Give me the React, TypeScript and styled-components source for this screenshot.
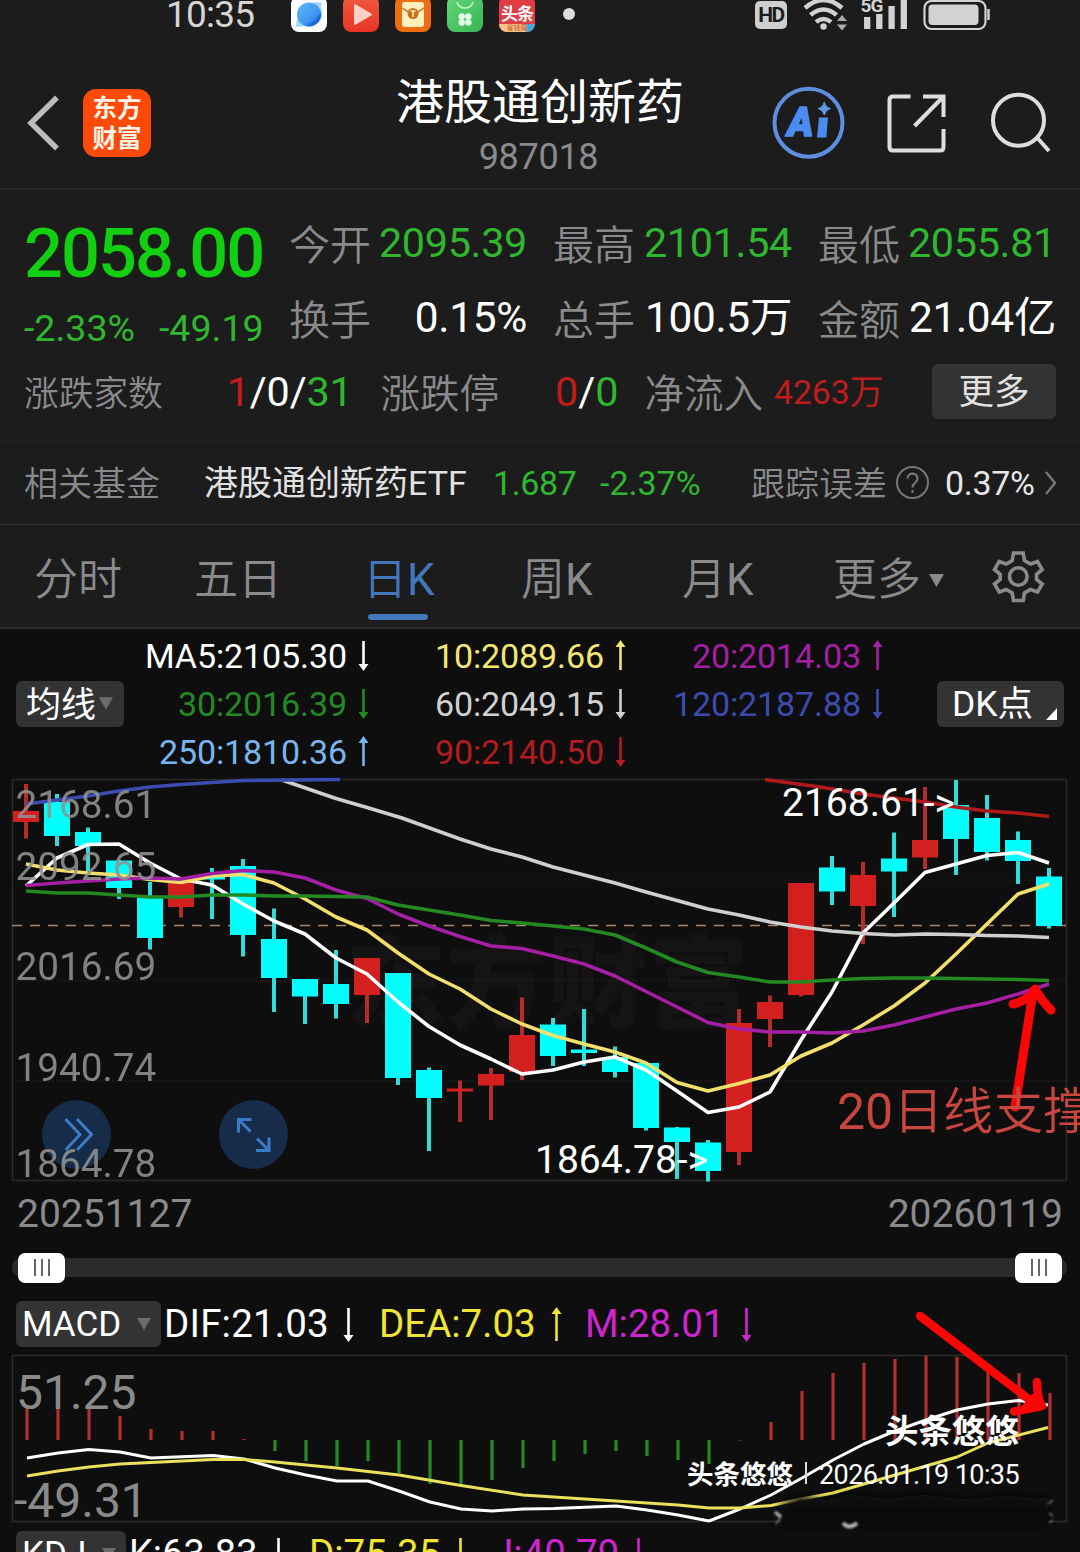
import React from 'react';
import styled, { createGlobalStyle } from 'styled-components';

const GREEN = '#2fb72f';
const RED = '#c01c1c';
const GRAY = '#8a8a8c';
const CYAN = '#00ffff';

const GlobalStyle = createGlobalStyle`
  * {
    box-sizing: border-box;
  }
  body {
    margin: 0;
    background: #0e0e0e;
    font-family: Roboto, 'Noto Sans CJK SC', sans-serif;
  }
  svg {
    display: block;
    flex: none;
  }
`;

const Page = styled.div`
  position: relative;
  width: 1080px;
  height: 1552px;
  overflow: hidden;
  background: #0e0e0e;
`;

const TopArea = styled.div`
  background: #1c1c1c;
`;

interface TextProps {
  $size?: number;
  $color?: string;
  $w?: number;
  $ml?: number;
  $ls?: number;
  $weight?: number;
}

const Text = styled.span<TextProps>`
  display: block;
  flex: none;
  white-space: nowrap;
  line-height: 1;
  font-size: ${(props) => props.$size || 34}px;
  color: ${(props) => props.$color || '#fff'};
  width: ${(props) => (props.$w ? `${props.$w}px` : 'auto')};
  margin-left: ${(props) => props.$ml || 0}px;
  letter-spacing: ${(props) => props.$ls || 0}px;
  font-weight: ${(props) => props.$weight || 400};
`;

const Label = styled(Text)`
  padding-bottom: 3px;
  color: ${GRAY};
  font-weight: 350;
  font-family: 'Noto Sans CJK SC', sans-serif;
`;

const ButtonText = styled(Text)`
  padding-top: 3px;
`;

/* status bar */

const StatusBar = styled.div`
  display: flex;
  align-items: flex-start;
  height: 64px;
  padding-left: 166px;
`;

const Clock = styled.div`
  width: 125px;
  margin-top: -4px;
  font-size: 37px;
  line-height: 38px;
  letter-spacing: -0.8px;
  color: #d6d6d6;
`;

const AppIcons = styled.div`
  display: flex;
  gap: 16px;
  margin-top: -4px;
`;

const AppIcon = styled.div<{ $bg: string }>`
  width: 36px;
  height: 36px;
  overflow: hidden;
  border-radius: 8px;
  background: ${(props) => props.$bg};
`;

const NewsTitle = styled.div`
  height: 28px;
  padding-top: 8px;
  text-align: center;
  font-size: 17px;
  font-weight: 700;
  line-height: 20px;
  letter-spacing: -1px;
  color: #fff;
  background: #e03c44;
`;

const NewsStrip = styled.div`
  height: 8px;
  overflow: hidden;
  font-size: 7px;
  line-height: 8px;
  text-align: center;
  color: #c8502c;
  background: linear-gradient(90deg, #f6c48a 70%, #3fa8d8 80%);
`;

const Dot = styled.div`
  width: 12px;
  height: 12px;
  margin: 8px 0 0 28px;
  border-radius: 50%;
  background: #dcdcdc;
`;

const HdBadge = styled.div`
  width: 32px;
  height: 28px;
  margin: 1px 0 0 180px;
  border-radius: 5px;
  background: #cfcfcf;
  color: #1c1c1c;
  font-size: 21px;
  font-weight: 700;
  line-height: 29px;
  text-align: center;
  letter-spacing: -1.5px;
`;

/* header */

const Header = styled.div`
  display: grid;
  grid-template-columns: 397px 286px 1fr;
  height: 126px;
  border-bottom: 2px solid #282828;
`;

const HeaderLeft = styled.div`
  display: flex;
  align-items: flex-start;
  padding: 25px 0 0 24px;
`;

const Logo = styled.div`
  width: 68px;
  height: 68px;
  margin-left: 21px;
  padding-top: 3px;
  border-radius: 13px;
  background: #fe4a08;
  color: #fff4e8;
  font-family: 'Noto Sans CJK SC', sans-serif;
  font-size: 24.5px;
  font-weight: 700;
  line-height: 29.5px;
  text-align: center;
`;

const Title = styled.div`
  display: flex;
  flex-direction: column;
  align-items: center;
  padding-top: 12px;
`;

const Name = styled.div`
  font-size: 48px;
  line-height: 54px;
  white-space: nowrap;
  color: #fff;
`;

const Code = styled.div`
  margin: 6px 3px 0 0;
  font-size: 36px;
  line-height: 42px;
  letter-spacing: -0.3px;
  color: ${GRAY};
`;

const HeaderIcons = styled.div`
  display: flex;
  align-items: flex-start;
  padding: 22px 0 0 89px;
`;

/* quote */

const Quote = styled.div`
  height: 252px;
  padding: 12px 24px 0 24px;
  border-bottom: 1px solid #262626;
`;

const QuoteTop = styled.div`
  display: grid;
  grid-template-columns: 265px 1fr;
  height: 154px;
`;

const Price = styled.div`
  height: 102px;
  width: 250px;
  font-size: 68.5px;
  font-weight: 500;
  line-height: 104px;
  letter-spacing: -1.9px;
  color: #12cf12;
`;

const Change = styled.div`
  display: flex;
  height: 50px;
  align-items: center;
`;

const StatGrid = styled.div`
  display: grid;
  grid-template-columns: 238px 239px 238px;
  grid-template-rows: 75px 75px;
  column-gap: 26px;
  padding-top: 4px;
`;

const Stat = styled.div`
  display: flex;
  align-items: center;
  justify-content: space-between;
`;

const Row = styled.div<{ $h: number }>`
  display: flex;
  align-items: center;
  height: ${(props) => props.$h}px;
`;

const Button = styled.div<{ $w: number; $h: number }>`
  display: flex;
  flex: none;
  align-items: center;
  width: ${(props) => props.$w}px;
  height: ${(props) => props.$h}px;
  border-radius: 6px;
  background: #333334;
`;

const MoreButton = styled(Button)`
  justify-content: center;
  margin: 0 0 3px auto;
`;

const FundRow = styled(Row)`
  padding-left: 24px;
  border-bottom: 1px solid #333;
`;

/* tabs */

const Tabs = styled.div`
  display: flex;
  height: 104px;
  padding-left: 34px;
  border-bottom: 2px solid #2c2c2e;
`;

const Tab = styled.div<{ $w: number; $active?: boolean }>`
  width: ${(props) => props.$w}px;
  padding-top: 30px;
  font-size: 44px;
  font-weight: 350;
  line-height: 50px;
  white-space: nowrap;
  color: ${(props) => (props.$active ? '#4377bb' : GRAY)};
`;

const Latin = styled.span`
  font-weight: 400;
`;

const TabLine = styled.div`
  width: 60px;
  height: 6px;
  margin: 9px 0 0 5px;
  border-radius: 3px;
  background: #4377bb;
`;

const TabMore = styled.div`
  display: flex;
  align-items: center;
  gap: 8px;
`;

/* MA legend */

const Legend = styled.div`
  display: flex;
  align-items: center;
  height: 148px;
  padding: 1px 0 0 16px;
`;

const LegendGrid = styled.div`
  display: grid;
  grid-template-columns: 246px 257px 257px;
  grid-template-rows: repeat(3, 48px);
  width: 813px;
`;

const LegendItem = styled.div`
  display: flex;
  align-items: center;
  justify-content: flex-end;
  gap: 10px;
`;

/* bottom part */

const Dates = styled.div`
  display: flex;
  justify-content: space-between;
  height: 61px;
  padding: 5px 17px 0 17px;
`;

const DateText = styled.span`
  font-size: 39px;
  line-height: 40px;
  color: ${GRAY};
`;

const Track = styled.div`
  display: flex;
  align-items: center;
  justify-content: space-between;
  height: 19px;
  margin: 8px 13px 18px 12px;
  padding: 0 5px 0 6px;
  border-radius: 10px;
  background: #2b2b2d;
`;

const Handle = styled.div`
  display: flex;
  align-items: center;
  justify-content: center;
  gap: 5px;
  width: 47px;
  height: 30px;
  border-radius: 7px;
  background: #fff;
`;

const Grip = styled.i`
  width: 2px;
  height: 17px;
  background: #666;
`;

const IndicatorRow = styled.div<{ $h: number }>`
  display: flex;
  align-items: center;
  height: ${(props) => props.$h}px;
  padding-left: 16px;
`;

const Stamp = styled.div`
  position: absolute;
  right: 61px;
  top: 1411px;
  display: flex;
  flex-direction: column;
  align-items: flex-end;
  color: #fff;
`;

const StampName = styled.div`
  font-size: 33.5px;
  font-weight: 700;
  line-height: 42px;
`;

const StampLine = styled.div`
  display: flex;
  align-items: center;
  height: 44px;
`;

const StampBar = styled.div`
  width: 2px;
  height: 22px;
  margin: 0 12px 4px;
  background: #ddd;
`;

const Overlay = styled.svg`
  position: absolute;
  left: 0;
  top: 0;
  pointer-events: none;
`;

type Dir = 'up' | 'down';

const Arrow = ({ dir, color, h = 31 }: { dir: Dir; color: string; h?: number }) => (
  <svg width='13' height={h} viewBox={`0 0 13 ${h}`}>
    <g transform={dir === 'up' ? `rotate(180 6.5 ${h / 2})` : undefined}>
      <path d={`M6.5 1V${h - 5}`} stroke={color} strokeWidth='2.6' />
      <path d={`M1.5 ${h - 7}H11.5L6.5 ${h}Z`} fill={color} />
    </g>
  </svg>
);

const Caret = ({ color, w = 15, h = 13 }: { color: string; w?: number; h?: number }) => (
  <svg width={w} height={h} viewBox='0 0 15 13' preserveAspectRatio='none'>
    <path d='M0 0H15L7.5 13Z' fill={color} />
  </svg>
);

const StatusIcons = () => (
  <StatusBar>
    <Clock>10:35</Clock>
    <AppIcons>
      <AppIcon $bg='#fbfdff'>
        <svg width='36' height='36'>
          <defs>
            <linearGradient id='globe' x1='0' y1='0' x2='1' y2='1'>
              <stop offset='0' stopColor='#5db8fb' />
              <stop offset='0.6' stopColor='#4397f3' />
              <stop offset='1' stopColor='#1a5fd8' />
            </linearGradient>
          </defs>
          <path d='M5 31C5 26 8 10 19 7C24 6 29 6 31 7C29 10 32 15 31 20C29 29 20 33 13 30Z' fill='#a5d5fb' />
          <circle cx='18' cy='18.5' r='12' fill='url(#globe)' />
          <path d='M15 29.5C22 27 28 22 29.8 16C31.5 24 24 31.5 15 29.5Z' fill='#1767de' />
        </svg>
      </AppIcon>
      <AppIcon $bg='linear-gradient(#f0593d, #e83525)'>
        <svg width='36' height='36'>
          <path d='M12 9L28 18.5L12 28Z' fill='#ffd0c6' stroke='#ffd0c6' strokeWidth='2' strokeLinejoin='round' />
        </svg>
      </AppIcon>
      <AppIcon $bg='#ee6d12'>
        <svg width='36' height='36'>
          <rect x='7' y='6' width='22' height='25' rx='3' fill='#fff0c0' />
          <path d='M7 12L18 19L29 12' fill='none' stroke='#d08638' strokeWidth='1.5' />
          <circle cx='18' cy='17.5' r='5.5' fill='#c8721e' />
          <path d='M15.5 15H20.5M18 15V21' stroke='#ffe9b8' strokeWidth='1.6' />
        </svg>
      </AppIcon>
      <AppIcon $bg='linear-gradient(135deg, #64d877, #36b455)'>
        <svg width='36' height='36' fill='#e4ffe6'>
          <path d='M10 6C12 14 24 14 26 6' fill='none' stroke='#b9f3c0' strokeWidth='1.6' />
          <circle cx='14.7' cy='20.5' r='3.2' />
          <circle cx='21.3' cy='20.5' r='3.2' />
          <circle cx='14.7' cy='26.5' r='3.2' />
          <circle cx='21.3' cy='26.5' r='3.2' />
        </svg>
      </AppIcon>
      <AppIcon $bg='#e03c44'>
        <NewsTitle>头条</NewsTitle>
        <NewsStrip>省钱薅</NewsStrip>
      </AppIcon>
    </AppIcons>
    <Dot />
    <HdBadge>HD</HdBadge>
    <svg width='204' height='32' viewBox='787 0 204 32' fill='none' stroke='#d2d2d2'>
      <path d='M805 8Q823.5 -8 842 8' strokeWidth='4.5' />
      <path d='M810.5 15Q823.5 4 836.5 15' strokeWidth='4.5' />
      <path d='M816 22Q823.5 16 831 22' strokeWidth='4.5' />
      <circle cx='823.5' cy='26.5' r='3.2' fill='#d2d2d2' stroke='none' />
      <path d='M837 21L842 15L847 21ZM837 24.5L842 30.5L847 24.5Z' fill='#aaa' stroke='none' />
      <path d='M867.2 17V29M879.3 14V29M891.6 6V29M903.8 -2V29' strokeWidth='6.3' />
      <text x='860.5' y='12' fill='#d2d2d2' stroke='none' fontSize='19' fontWeight='700' letterSpacing='-0.8'>
        5G
      </text>
      <rect x='924.5' y='1' width='61' height='28' rx='7' strokeWidth='2.2' />
      <rect x='928.5' y='4.5' width='50' height='20.5' rx='4' fill='#d2d2d2' stroke='none' />
      <path d='M988.5 9V20' strokeWidth='2.5' />
    </svg>
  </StatusBar>
);

const PageHeader = () => (
  <Header>
    <HeaderLeft>
      <svg width='38' height='68' viewBox='24 89 38 68'>
        <path d='M57 97.5L31 123L57 148.5' fill='none' stroke='#bcbcbc' strokeWidth='5.5' />
      </svg>
      <Logo>
        东方
        <br />
        财富
      </Logo>
    </HeaderLeft>
    <Title>
      <Name>港股通创新药</Name>
      <Code>987018</Code>
    </Title>
    <HeaderIcons>
      <svg width='284' height='74' viewBox='772 86 284 74' fill='none' stroke='#dedede' strokeWidth='4'>
        <circle cx='808.5' cy='122.7' r='34' stroke='#5e8fdf' />
        <text
          x='787.5'
          y='136'
          fill='#4c8cf2'
          stroke='#4c8cf2'
          strokeWidth='1.5'
          fontSize='41'
          fontWeight='900'
          fontStyle='italic'
          textLength='26'
          lengthAdjust='spacingAndGlyphs'
        >
          A
        </text>
        <path d='M819 117.5H828L826.3 137.5H817Z' fill='#4c8cf2' stroke='none' />
        <path
          d='M824.3 102Q825.5 107.5 830.5 108.5Q825.5 109.8 824.3 115Q823 109.8 818 108.5Q823 107.5 824.3 102Z'
          fill='#5e9bea'
          stroke='#5e9bea'
          strokeWidth='1'
        />
        <path d='M910.5 96.5H893Q889.5 96.5 889.5 100V147Q889.5 150.5 893 150.5H940.5Q943.5 150.5 943.5 147V129' />
        <path d='M923 96.5H943.5V117M943 97L914.5 126' />
        <circle cx='1018.5' cy='120.2' r='25.5' />
        <path d='M1037 137.5L1049 151' />
      </svg>
    </HeaderIcons>
  </Header>
);

const stats = [
  { label: '今开', value: '2095.39', color: GREEN, size: 41.3 },
  { label: '最高', value: '2101.54', color: GREEN, size: 41.3 },
  { label: '最低', value: '2055.81', color: GREEN, size: 41.3 },
  { label: '换手', value: '0.15%', color: '#fff', size: 42.4 },
  { label: '总手', value: '100.5万', color: '#fff', size: 42.4 },
  { label: '金额', value: '21.04亿', color: '#fff', size: 42.4 },
];

const QuotePanel = () => (
  <Quote>
    <QuoteTop>
      <div>
        <Price>2058.00</Price>
        <Change>
          <Text $size={37.5} $color={GREEN} $w={135}>
            -2.33%
          </Text>
          <Text $size={37.5} $color={GREEN}>
            -49.19
          </Text>
        </Change>
      </div>
      <StatGrid>
        {stats.map((s) => (
          <Stat key={s.label}>
            <Label $size={41}>{s.label}</Label>
            <Text $size={s.size} $color={s.color} $ls={-0.3}>
              {s.value}
            </Text>
          </Stat>
        ))}
      </StatGrid>
    </QuoteTop>
    <Row $h={73}>
      <Label $size={34.7}>涨跌家数</Label>
      <Text $size={41.3} $color={RED} $ml={64} $ls={-0.2}>
        1<span style={{ color: '#fff' }}>/0/</span>
        <span style={{ color: GREEN }}>31</span>
      </Text>
      <Label $size={39.5} $ml={28}>
        涨跌停
      </Label>
      <Text $size={41.3} $color={RED} $ml={56}>
        0<span style={{ color: '#fff' }}>/</span>
        <span style={{ color: GREEN }}>0</span>
      </Text>
      <Label $size={39.5} $ml={26}>
        净流入
      </Label>
      <Text $size={33.7} $color={RED} $ml={11}>
        4263万
      </Text>
      <MoreButton $w={124} $h={55}>
        <ButtonText $size={35.5} $color='#e2e2e2'>
          更多
        </ButtonText>
      </MoreButton>
    </Row>
  </Quote>
);

const Fund = () => (
  <FundRow $h={83}>
    <Label $size={34} $w={180}>
      相关基金
    </Label>
    <Text $size={34} $color='#e2e2e2' $w={289}>
      港股通创新药ETF
    </Text>
    <Text $size={34} $color={GREEN} $w={107} $ls={-0.4}>
      1.687
    </Text>
    <Text $size={34} $color={GREEN} $w={151}>
      -2.37%
    </Text>
    <Label $size={34}>跟踪误差</Label>
    <svg width='58' height='34' viewBox='887 465 58 34' fill='none'>
      <circle cx='912.5' cy='481.5' r='15.5' stroke='#77777a' strokeWidth='2' />
      <path
        d='M907.5 477.5C907.5 471 917.5 471 917.5 477.5C917.5 482 912.5 481.5 912.5 486.5M912.5 489V492'
        stroke='#77777a'
        strokeWidth='2.2'
      />
    </svg>
    <Text $size={34} $color='#e6e6e6' $w={99} $ls={-0.3}>
      0.37%
    </Text>
    <svg width='14' height='26'>
      <path d='M2 2L11 13L2 24' fill='none' stroke='#77777a' strokeWidth='2.4' />
    </svg>
  </FundRow>
);

const TabBar = () => (
  <Tabs>
    <Tab $w={160}>分时</Tab>
    <Tab $w={169}>五日</Tab>
    <Tab $w={158} $active>
      日<Latin>K</Latin>
      <TabLine />
    </Tab>
    <Tab $w={161}>
      周<Latin>K</Latin>
    </Tab>
    <Tab $w={151}>
      月<Latin>K</Latin>
    </Tab>
    <Tab $w={158}>
      <TabMore>
        更多
        <Caret color='#8a8a8c' />
      </TabMore>
    </Tab>
    <svg width='54' height='104' viewBox='991 525 54 104' fill='none' stroke='#8a8a8c' strokeWidth='3.6'>
      <circle cx='1018.3' cy='576.5' r='8.8' />
      <path d='M1013.5 553H1023.2L1024.5 560.5L1030.5 564L1037.5 561.5L1042.2 569.5L1036.5 574.3V579.5L1042.2 584L1037.5 592L1030.5 589.5L1024.5 593L1023.2 600.5H1013.5L1012.2 593L1006.2 589.5L999.2 592L994.5 584L1000.2 579.5V574.3L994.5 569.5L999.2 561.5L1006.2 564L1012.2 560.5Z' />
    </svg>
  </Tabs>
);

const averages: { text: string; color: string; dir: Dir }[] = [
  { text: 'MA5:2105.30', color: '#fff', dir: 'down' },
  { text: '10:2089.66', color: '#f3e673', dir: 'up' },
  { text: '20:2014.03', color: '#a51fa5', dir: 'up' },
  { text: '30:2016.39', color: '#238a23', dir: 'down' },
  { text: '60:2049.15', color: '#d0d0d0', dir: 'down' },
  { text: '120:2187.88', color: '#3c4cae', dir: 'down' },
  { text: '250:1810.36', color: '#79b6ef', dir: 'up' },
  { text: '90:2140.50', color: '#b31c1f', dir: 'down' },
];

const MaLegend = () => (
  <Legend>
    <Button $w={108} $h={46}>
      <ButtonText $size={35} $ml={10}>
        均线
      </ButtonText>
      <svg width='17' height='13' viewBox='-3 0 18 13'>
        <path d='M0 0H15L7.5 13Z' fill='#6c6c6e' />
      </svg>
    </Button>
    <LegendGrid>
      {averages.map((m) => (
        <LegendItem key={m.text}>
          <Text $size={34} $color={m.color} $ls={-0.1}>
            {m.text}
          </Text>
          <Arrow dir={m.dir} color={m.color} />
        </LegendItem>
      ))}
    </LegendGrid>
    <Button $w={127} $h={46}>
      <ButtonText $size={35.5} $ml={15} $w={93}>
        DK点
      </ButtonText>
      <svg width='14' height='46'>
        <path d='M1 39L12 27V39Z' fill='#fff' />
      </svg>
    </Button>
  </Legend>
);

// [up, high, body top, body bottom, low]
const candles: [number, number, number, number, number][] = [
  [1, 784, 811, 822, 838.5],
  [0, 794, 802, 836, 846],
  [0, 827.5, 832, 846, 871],
  [0, 860, 860.5, 888, 899],
  [0, 882, 898, 938, 949.5],
  [1, 882, 882, 907, 917.5],
  [0, 868, 876, 879.5, 919],
  [0, 859, 866, 935, 956.5],
  [0, 908.5, 939, 978, 1012],
  [0, 979, 979, 996.5, 1024],
  [0, 950, 984, 1004, 1018.5],
  [1, 958, 958, 995, 1023],
  [0, 973, 973, 1078, 1085],
  [0, 1067.5, 1070, 1098, 1151],
  [1, 1080.5, 1088.5, 1091.5, 1122],
  [1, 1068, 1074, 1085.5, 1120],
  [1, 997.5, 1035, 1072, 1080],
  [0, 1018, 1024.5, 1056, 1066],
  [0, 1009, 1049.5, 1053, 1066],
  [0, 1046.5, 1057, 1072, 1077.5],
  [0, 1062.5, 1063, 1128, 1130.5],
  [0, 1127, 1127.5, 1142, 1179],
  [0, 1140, 1142.5, 1171, 1181.5],
  [1, 1009, 1023, 1152, 1165],
  [1, 995.5, 1002, 1019, 1047],
  [1, 883, 883, 995, 996.5],
  [0, 856, 867.5, 891.5, 905],
  [1, 862, 875, 906, 944],
  [0, 832.5, 858.5, 871.5, 917],
  [1, 787, 840, 857.5, 869],
  [0, 780, 805, 839, 875],
  [0, 795, 818, 852, 860.5],
  [0, 831.5, 840, 861, 884],
  [0, 868, 876.5, 926, 928.5],
];

const every = (ys: number[]) => ys.map((y, i) => `${26 + i * 31},${y}`).join(' ');

const ma5 = every([
  886, 858, 844.5, 844, 863, 879, 885, 904, 921, 934, 958, 974, 1002, 1026.5, 1045, 1059, 1074, 1070, 1062, 1057, 1070,
  1091, 1112.5, 1107, 1092, 1040, 992, 933, 903, 872.5, 864, 855.5, 852.5, 863,
]);
const ma10 = every([
  864, 870, 873, 875, 879.5, 882.5, 876, 874.5, 883, 899, 917, 930, 953, 974, 989, 1009, 1024, 1035.5, 1044, 1052, 1063,
  1082.5, 1091, 1083.5, 1075, 1056, 1043, 1025, 1006, 983, 954, 924, 894, 884,
]);
const ma20 = every([
  885.5, 883, 881, 879, 878, 879, 873.5, 870.5, 872, 878, 890, 898.5, 914, 926, 936.5, 946, 948.5, 956, 964, 976, 991.5,
  1007, 1022.5, 1029, 1032, 1032, 1033, 1031, 1025, 1017, 1009, 1003, 994, 984,
]);
const ma30 = every([
  891, 893, 893, 895, 897, 897, 895, 895, 896, 896, 896.5, 897, 905, 910, 915, 920.5, 923, 926, 929, 935, 948, 962, 972.5,
  977, 982, 982, 980, 978.5, 978, 978, 978.5, 979, 979.5, 980.5,
]);
const ma60 =
  '282,780 336,798.5 367,807.5 402,818 460,839 491,849 522,857 553,867 615,883 646,892 708,909 739,915 770,922 801,927 832,931 863,933.5 894,935 925,934 956,934.5 987,935.5 1018,936 1049,937.5';
const ma120 = '26,804 57,800 88,796 119,791 150,787 181,784.5 243,780.5 340,779.5';
const ma90 = '765,779.5 820,787 863,794 925,802 956,807 987,811 1018,813 1049,816.5';

const axis: [string, number][] = [
  ['2168.61', 817.5],
  ['2092.65', 880],
  ['2016.69', 980],
  ['1940.74', 1081],
  ['1864.78', 1177],
];

const KChart = () => (
  <svg width='1080' height='412' viewBox='0 777 1080 412' fill='none'>
    <text x='345' y='1020' fontSize='101' fontWeight='900' fill='#151313'>
      东方财富
    </text>
    <rect x='12.5' y='779.5' width='1054' height='401' stroke='#2a2a2a' strokeWidth='1.5' />
    {[880, 980.5, 1081].map((y) => (
      <path key={y} d={`M12 ${y}H1067`} stroke='#222' strokeDasharray='2 2' />
    ))}
    <path d='M12 925.5H1067' stroke='#a98768' strokeWidth='1.3' strokeDasharray='10 8' />
    {candles.map(([up, high, top, bottom, low], i) => {
      const x = 26 + i * 31;
      return (
        <g key={x}>
          <path d={`M${x} ${high}V${low}`} stroke={up ? '#b52c2c' : '#2fdcd8'} strokeWidth='4' />
          <rect x={x - 13} y={top} width='26' height={bottom - top} fill={up ? '#d41f1f' : CYAN} />
        </g>
      );
    })}
    <g strokeWidth='3.6' strokeLinejoin='round'>
      <polyline points={ma5} stroke='#fff' />
      <polyline points={ma10} stroke='#f3e06c' />
      <polyline points={ma20} stroke='#a51fa5' />
      <polyline points={ma30} stroke='#238a23' />
      <polyline points={ma60} stroke='#cfcfcf' />
      <polyline points={ma120} stroke='#3c4cae' />
      <polyline points={ma90} stroke='#b01a1a' />
    </g>
    {[76.5, 253.5].map((x) => (
      <circle key={x} cx={x} cy='1134.5' r='34.5' fill='#162c48' />
    ))}
    <g stroke='#3b7cc9' strokeWidth='3'>
      <path d='M65.5 1119L80 1134.5L65.5 1150M77 1119L91.5 1134.5L77 1150' />
      <path d='M251.5 1119.5H238.5V1132.5M239 1120L250.5 1131.5M256 1150.5H269V1137.5M268.5 1150L257 1138.5' />
    </g>
    {axis.map(([label, y]) => (
      <text key={label} x='15.5' y={y} fontSize='38.7' fill='#929292' opacity='0.88'>
        {label}
      </text>
    ))}
    <g fontSize='39' fill='#fff'>
      <text x='782' y='816'>
        {'2168.61->'}
      </text>
      <text x='535' y='1172.5'>
        {'1864.78->'}
      </text>
    </g>
    <path
      d='M1015 1107L1033 992M1013 1004Q1028 1001 1035 989Q1042 1001 1051 1010'
      stroke='#f90606'
      strokeWidth='9'
      strokeLinecap='round'
      strokeLinejoin='round'
    />
    <text x='837' y='1129' fontSize='50' fill='#c9463f'>
      20<tspan fontWeight='350'>日线支撑</tspan>
    </text>
  </svg>
);

const macdBars = [
  1405, 1405, 1407, 1416, 1429, 1431, 1431, 1439, 1451, 1461, 1466, 1461, 1473, 1484, 1485, 1480, 1468, 1461, 1454, 1451,
  1456, 1460, 1464, 1440.5, 1422, 1391, 1373, 1363, 1359, 1355.5, 1357, 1372, 1373, 1393,
];
const dif =
  '27,1458 58,1453 89,1449.5 120,1452 151,1458 213,1455.5 244,1459 275,1468 306,1475 337,1481 368,1481 399,1491 430,1502 461,1509 492,1511 523,1509 554,1508.5 616,1506 647,1510 678,1515 709,1521 740,1509 771,1495 802,1478 833,1460 864,1444 895,1431 926,1420 957,1410 988,1404 1019,1400.5 1048,1405';
const dea =
  '27,1476 58,1471 89,1467 120,1464 182,1461 213,1459.5 244,1459.5 275,1462 337,1468 399,1475 461,1485.5 523,1495 616,1501 678,1505 709,1508 740,1508 771,1505.5 802,1499 833,1493 895,1475 957,1457 988,1443 1048,1427.5';

const MacdChart = () => (
  <svg width='1080' height='177' viewBox='0 1353 1080 177' fill='none'>
    <rect x='12.5' y='1355.5' width='1054' height='166' stroke='#2c2c2c' strokeWidth='1.5' />
    {macdBars.map((y, i) => (
      <path key={i} d={`M${27 + i * 31} 1440V${y}`} stroke={y > 1440 ? '#258a25' : '#b22f2f'} strokeWidth='3.2' />
    ))}
    <g strokeWidth='3' strokeLinejoin='round'>
      <polyline points={dif} stroke='#fff' />
      <polyline points={dea} stroke='#ebe05c' />
    </g>
    <g fontSize='48' fill='#8a8a8a'>
      <text x='16' y='1409'>
        51.25
      </text>
      <text x='14' y='1516.5'>
        -49.31
      </text>
    </g>
  </svg>
);

const Annotations = () => (
  <Overlay width='1080' height='1552' viewBox='0 0 1080 1552' fill='none'>
    <defs>
      <filter id='smudge' x='-10%' y='-40%' width='120%' height='180%'>
        <feGaussianBlur stdDeviation='3' />
      </filter>
      <filter id='soft'>
        <feGaussianBlur stdDeviation='1' />
      </filter>
    </defs>
    <path
      d='M780 1506L800 1496L825 1500L850 1494L885 1498L925 1494L965 1499L1005 1495L1048 1498V1526H780Z'
      fill='#070707'
      filter='url(#smudge)'
    />
    <rect x='782' y='1509' width='266' height='17' fill='#0a0a0a' />
    <g filter='url(#soft)' stroke='#b9b9b9'>
      <path d='M775 1512L781 1517' strokeWidth='3' />
      <path
        d='M776 1524L780 1518M1048 1504L1053 1500M1049 1513L1053 1516M1049 1523L1053 1520'
        strokeWidth='1.5'
        opacity='0.7'
      />
      <path d='M843 1523Q849 1530 857 1523' strokeWidth='4' />
    </g>
    <path
      d='M920 1316L1035 1404M1037 1382Q1037 1398 1042 1406Q1030 1409 1014 1411.5M1034 1398L1040 1406L1026 1408Z'
      stroke='#f90606'
      strokeWidth='8.5'
      strokeLinecap='round'
      strokeLinejoin='round'
    />
  </Overlay>
);

const SliderHandle = () => (
  <Handle>
    <Grip />
    <Grip />
    <Grip />
  </Handle>
);

const App = () => {
  return (
    <Page>
      <GlobalStyle />
      <TopArea>
        <StatusIcons />
        <PageHeader />
        <QuotePanel />
        <Fund />
        <TabBar />
      </TopArea>
      <MaLegend />
      <KChart />
      <Dates>
        <DateText>20251127</DateText>
        <DateText>20260119</DateText>
      </Dates>
      <Track>
        <SliderHandle />
        <SliderHandle />
      </Track>
      <IndicatorRow $h={58}>
        <Button $w={145} $h={46}>
          <Text $size={35} $ml={6} $w={115}>
            MACD
          </Text>
          <Caret color='#6c6c6e' w={14} h={12} />
        </Button>
        <Text $size={38.5} $ml={3} $w={178} $ls={0.2}>
          DIF:21.03
        </Text>
        <Arrow dir='down' color='#fff' h={35} />
        <Text $size={38.5} $color='#f0e535' $ml={24} $w={171}>
          DEA:7.03
        </Text>
        <Arrow dir='up' color='#f0e535' h={35} />
        <Text $size={38.5} $color='#cf25cf' $ml={22} $w={155}>
          M:28.01
        </Text>
        <Arrow dir='down' color='#cf25cf' h={35} />
      </IndicatorRow>
      <MacdChart />
      <IndicatorRow $h={48}>
        <Button $w={110} $h={46}>
          <Text $size={35} $ml={6} $w={80}>
            KDJ
          </Text>
          <Caret color='#6c6c6e' w={14} h={12} />
        </Button>
        <Text $size={38} $ml={3} $w={143}>
          K:63.83
        </Text>
        <Arrow dir='down' color='#fff' h={35} />
        <Text $size={38.5} $color='#f0e535' $ml={24} $w={145}>
          D:75.35
        </Text>
        <Arrow dir='down' color='#f0e535' h={35} />
        <Text $size={38.5} $color='#cf25cf' $ml={25} $w={140}>
          J:40.79
        </Text>
        <Arrow dir='down' color='#cf25cf' h={35} />
      </IndicatorRow>
      <Annotations />
      <Stamp>
        <StampName>头条悠悠</StampName>
        <StampLine>
          <Text $size={26.5} $weight={700}>
            头条悠悠
          </Text>
          <StampBar />
          <Text $size={27} $ls={-0.6}>
            2026.01.19 10:35
          </Text>
        </StampLine>
      </Stamp>
    </Page>
  );
};

export default App;
